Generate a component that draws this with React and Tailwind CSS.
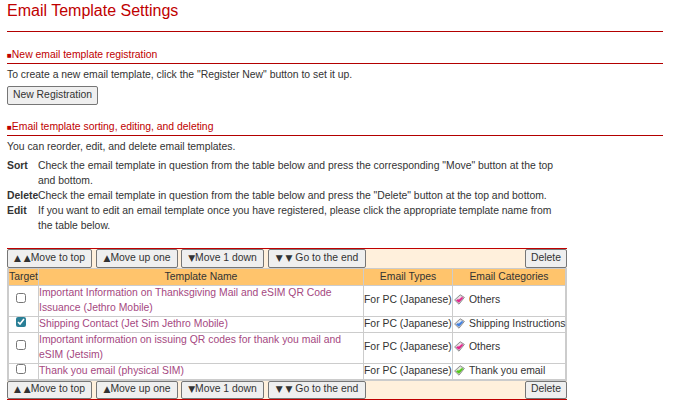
const rows = [
  { name: <>Important Information on Thanksgiving Mail and eSIM QR Code<br />Issuance (Jethro Mobile)</>, cat: 'Others', color: '#e0268c', h: 'h-[31px]', box: 'mt-[7px]' },
  { name: 'Shipping Contact (Jet Sim Jethro Mobile)', cat: 'Shipping Instructions', color: '#3f7fe0', h: 'h-[16px]', box: 'mt-0', checked: true },
  { name: <>Important information on issuing QR codes for thank you mail and<br />eSIM (Jetsim)</>, cat: 'Others', color: '#e0268c', h: 'h-[31px]', box: 'mt-[7px]' },
  { name: 'Thank you email (physical SIM)', cat: 'Thank you email', color: '#52c818', h: 'h-[16px]', box: 'mt-0' },
];

function Tag({ color }) {
  return (
    <svg width="11" height="11" viewBox="0 0 11 11" className="shrink-0">
      <path d="M0.6 6 6.2 0.8 10.4 3.4 5 10.2Z" fill="#ddd" stroke="#777" strokeWidth="0.8" />
      <path d="M2 6.6 7 2.6 9.4 3.8 5 8.8Z" fill={color} />
      <path d="M3.4 5.2 6.2 2.2 8 3 5 5.6Z" fill="#fff" opacity="0.75" />
    </svg>
  );
}

function Btn({ children, className = '' }) {
  return (
    <button className={`border border-[#767676] rounded-[2px] bg-[#efefef] text-[#333] leading-none whitespace-nowrap p-0 ${className}`}>
      {children}
    </button>
  );
}

function Arrows({ children }) {
  return <span className="text-[9px] font-['DejaVu_Sans',sans-serif]">{children}</span>;
}

function Toolbar({ h }) {
  return (
    <div className={`flex bg-[#fff0dc] ${h}`}>
      <Btn className="w-[85px] mr-[4px]"><Arrows>▲ ▲</Arrows>Move to top</Btn>
      <Btn className="w-[82px] mr-[3px]"><Arrows>▲</Arrows>Move up one</Btn>
      <Btn className="w-[83px] mr-[4px]"><Arrows>▼</Arrows>Move 1 down</Btn>
      <Btn className="w-[98px]"><Arrows>▼ ▼</Arrows> Go to the end</Btn>
      <Btn className="w-[42px] ml-auto">Delete</Btn>
    </div>
  );
}

function Heading({ children }) {
  return (
    <h2 className="h-[16px] border-b border-[#b30000] text-[#c00000] leading-[13px]">
      <span className="text-[8px] leading-none">■</span>{children}
    </h2>
  );
}

function Help({ label, children }) {
  return (
    <div className="flex leading-[15px] whitespace-nowrap">
      <b className="w-[31px] shrink-0 font-bold">{label}</b>
      <p>{children}</p>
    </div>
  );
}

const cell = 'p-0 border-t border-l border-[#ccc] whitespace-nowrap';

export default function App() {
  return (
    <div className="h-[416px] overflow-hidden bg-white px-[7px] text-[10.4px] text-[#333] font-['Liberation_Sans',Arial,sans-serif]">
      <h1 className="w-[656px] h-[32px] pt-px border-b border-[#b30000] text-[#c00000] text-[16px] leading-[20px]">Email Template Settings</h1>

      <div className="w-[656px] mt-[16px]">
        <Heading>New email template registration</Heading>
        <p className="mt-[3px] leading-[15px]">To create a new email template, click the "Register New" button to set it up.</p>
        <Btn className="w-[91px] h-[19px] mt-[4px] block">New Registration</Btn>
      </div>

      <div className="w-[656px] mt-[15px]">
        <Heading>Email template sorting, editing, and deleting</Heading>
        <p className="mt-[3px] mb-[4px] leading-[15px]">You can reorder, edit, and delete email templates.</p>
        <Help label="Sort">Check the email template in question from the table below and press the corresponding "Move" button at the top<br />and bottom.</Help>
        <Help label="Delete">Check the email template in question from the table below and press the "Delete" button at the top and bottom.</Help>
        <Help label="Edit">If you want to edit an email template once you have registered, please click the appropriate template name from<br />the table below.</Help>
      </div>

      <div className="w-[560px] mt-[15px] border-y border-[#c00000]">
        <Toolbar h="h-[19px]" />
        <table className="w-full table-fixed border-separate border-spacing-0 border-x-2 border-b-2 border-[#ccc]">
          <colgroup>
            <col className="w-[29px]" />
            <col className="w-[325px]" />
            <col className="w-[89px]" />
            <col />
          </colgroup>
          <thead>
            <tr className="h-[16px] bg-[#ffc46c]">
              <th className="font-normal p-0 border-t border-[#ccc]">Target</th>
              <th className={`font-normal ${cell}`}>Template Name</th>
              <th className={`font-normal ${cell}`}>Email Types</th>
              <th className={`font-normal ${cell}`}>Email Categories</th>
            </tr>
          </thead>
          <tbody>
            {rows.map((r, i) => (
              <tr key={i} className={r.h}>
                <td className="p-0 border-t border-[#ccc] align-top">
                  <input type="checkbox" readOnly checked={!!r.checked} className={`block accent-[#2a7f96] w-[10px] h-[10px] ml-[7px] mb-0 ${r.box}`} />
                </td>
                <td className={`${cell} leading-[15px] text-[#a5487f]`}>
                  <div className="-mt-px mb-px">{r.name}</div>
                </td>
                <td className={`${cell} leading-[15px]`}>
                  <div className="-mt-px mb-px">For PC (Japanese)</div>
                </td>
                <td className={`${cell} leading-[15px]`}>
                  <div className="flex items-center gap-[4px] pl-px -mt-px mb-px"><Tag color={r.color} />{r.cat}</div>
                </td>
              </tr>
            ))}
          </tbody>
        </table>
        <Toolbar h="h-[18px]" />
      </div>
    </div>
  );
}
